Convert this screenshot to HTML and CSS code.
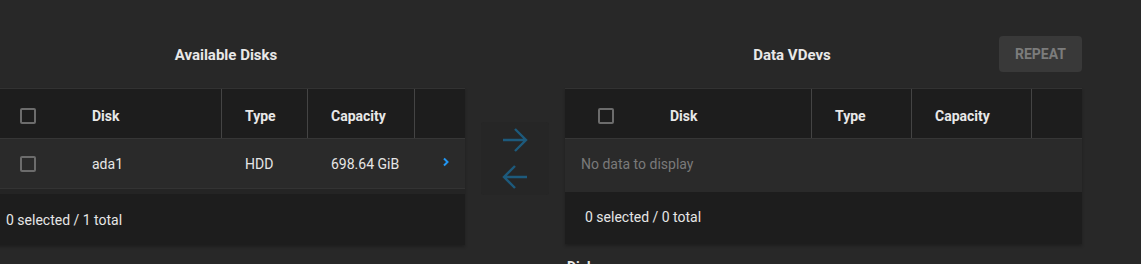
FILE: index.html
```html
<!DOCTYPE html>
<html>
<head>
<meta charset="utf-8">
<link rel="stylesheet" href="styles.css">
</head>
<body>
<div class="layout">
  <section class="panel panel-left">
    <div class="panel-head">
      <div class="title">Available Disks</div>
    </div>
    <div class="table">
      <div class="row head cols-left">
        <div class="cell cb-cell"><span class="checkbox"></span></div>
        <div class="cell disk">Disk</div>
        <div class="cell sep">Type</div>
        <div class="cell sep">Capacity</div>
        <div class="cell sep"></div>
      </div>
      <div class="row body cols-left">
        <div class="cell cb-cell"><span class="checkbox"></span></div>
        <div class="cell disk">ada1</div>
        <div class="cell">HDD</div>
        <div class="cell">698.64 GiB</div>
        <div class="cell chev"><svg width="8" height="10" viewBox="0 0 8 10"><path d="M2 1.5 L5.5 5 L2 8.5" fill="none" stroke="#2196f3" stroke-width="2"/></svg></div>
      </div>
      <div class="strip"></div>
      <div class="foot">0 selected / 1 total</div>
    </div>
  </section>

  <div class="mover">
    <svg class="arrow" width="28" height="28" viewBox="0 0 28 28"><path d="M2 14 H25 M14 3 L25 14 L14 25" fill="none" stroke="#1d5a7c" stroke-width="2.4"/></svg>
    <svg class="arrow" width="28" height="28" viewBox="0 0 28 28"><path d="M26 14 H3 M14 3 L3 14 L14 25" fill="none" stroke="#1d5a7c" stroke-width="2.4"/></svg>
  </div>

  <section class="panel panel-right">
    <div class="panel-head">
      <div class="title title-right">Data VDevs</div>
      <button class="repeat">REPEAT</button>
    </div>
    <div class="table">
      <div class="row head cols-right">
        <div class="cell cb-cell"><span class="checkbox"></span></div>
        <div class="cell disk">Disk</div>
        <div class="cell sep">Type</div>
        <div class="cell sep">Capacity</div>
        <div class="cell sep"></div>
      </div>
      <div class="row empty">No data to display</div>
      <div class="foot foot-right">0 selected / 0 total</div>
    </div>
    <div class="next">Disks</div>
  </section>
</div>
</body>
</html>
```

FILE: styles.css
```css
html, body {
  margin: 0;
  padding: 0;
  background: #282828;
  overflow: hidden;
}
body {
  font-family: Roboto, "Liberation Sans", sans-serif;
  font-size: 14px;
  color: #e6e6e6;
  width: 1141px;
  height: 264px;
}
.layout {
  display: flex;
  align-items: flex-start;
  margin-left: -13px;
  gap: 16px;
}
.panel-left { width: 478px; }
.panel-right { width: 517px; }
.panel-head {
  height: 88px;
  display: flex;
  align-items: center;
  box-sizing: border-box;
}
.title {
  flex: 1;
  text-align: center;
  font-weight: 700;
  font-size: 15px;
  color: #e8e8e8;
  padding-top: 22px;
}
.title-right {
  padding-left: 20px;
}
.repeat {
  width: 83px;
  height: 36px;
  margin-top: 20px;
  border: none;
  border-radius: 4px;
  background: #393939;
  color: #7c7c7c;
  font-family: Roboto, "Liberation Sans", sans-serif;
  font-weight: 700;
  font-size: 14px;
  padding: 0;
}
.table {
  background: #1d1d1d;
  box-shadow: 0 2px 3px rgba(0,0,0,0.25);
}
.row {
  display: grid;
  align-items: stretch;
}
.cols-left { grid-template-columns: 105px 129px 86px 107px 51px; }
.cols-right { grid-template-columns: 105px 141px 100px 120px 51px; }
.head {
  height: 49px;
  background: #1d1d1d;
  border-top: 1px solid #323232;
  border-bottom: 1px solid #363636;
  font-weight: 700;
  color: #e8e8e8;
}
.head .cell { padding-top: 4px; }
.body {
  height: 49px;
  background: #2a2a2a;
  border-bottom: 1px solid #333;
}
.cell {
  display: flex;
  align-items: center;
  padding-left: 24px;
}
.cell.disk { padding-left: 0; }
.cell.sep { border-left: 1px solid #444; padding-left: 23px; }
.cb-cell { padding-left: 33px; }
.checkbox {
  width: 12px;
  height: 12px;
  border: 2px solid #6c6c6c;
  border-radius: 2px;
  display: block;
}
.chev { padding-left: 28px; padding-bottom: 4px; }
.strip {
  height: 5px;
  background: #242424;
}
.foot {
  height: 51px;
  display: flex;
  align-items: center;
  padding-left: 19px;
  background: #1d1d1d;
  color: #e6e6e6;
}
.foot-right {
  height: 52px;
  padding-left: 20px;
  padding-bottom: 2px;
  box-sizing: border-box;
}
.empty {
  display: flex;
  align-items: center;
  height: 53px;
  padding-left: 16px;
  padding-bottom: 4px;
  box-sizing: border-box;
  background: #2a2a2a;
  color: #7a7a7a;
}
.mover {
  margin-top: 122px;
  width: 68px;
  height: 73px;
  background: #262626;
  border-radius: 3px;
  display: flex;
  flex-direction: column;
  align-items: center;
  justify-content: center;
  gap: 9px;
}
.arrow { display: block; }
.next {
  margin-top: 15px;
  font-weight: 700;
  color: #e8e8e8;
  padding-left: 2px;
}
```
